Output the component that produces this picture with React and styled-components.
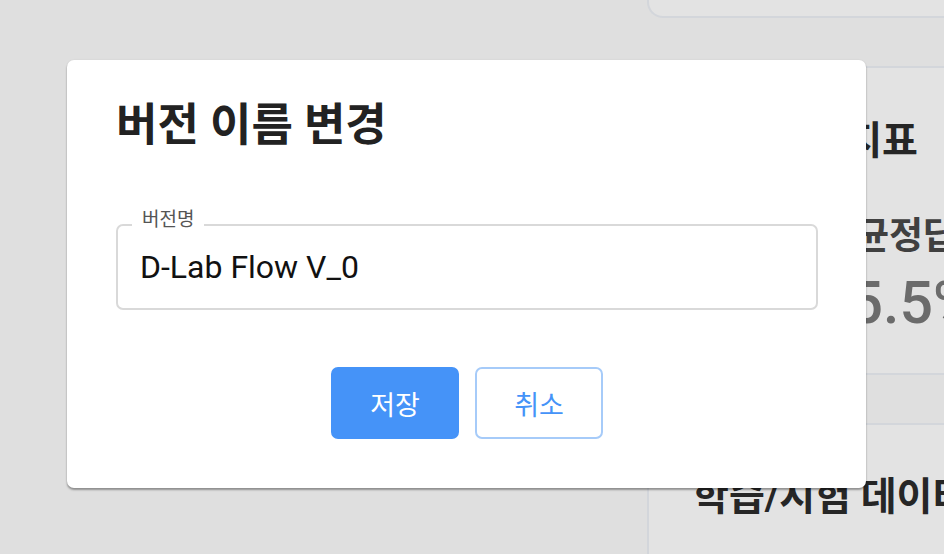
import React from "react";
import styled, { createGlobalStyle } from "styled-components";

const Global = createGlobalStyle`
  html, body { margin: 0; padding: 0; background: #dfdfdf; }
  body { font-family: Roboto, "Noto Sans CJK KR", sans-serif; }
  * { box-sizing: border-box; }
`;

const Page = styled.div`
  position: relative;
  width: 944px;
  height: 554px;
  overflow: hidden;
  display: flex;
  background: #dfdfdf;
`;

const Main = styled.div`
  width: 647px;
  flex: none;
`;

const Side = styled.div`
  flex: 1;
  display: flex;
  flex-direction: column;
  gap: 48px;
  min-width: 0;
`;

const Card = styled.section`
  flex: none;
  background: #e3e3e3;
  border: 2px solid #d3d6db;
  border-right: none;
  border-radius: 16px 0 0 16px;
  padding: ${(p) => p.$pad || "0 0 0 44px"};
  height: ${(p) => p.$h || "auto"};
  margin-top: ${(p) => p.$mt || "0"};
  white-space: nowrap;
`;

const CardTitle = styled.h2`
  margin: 0;
  font-size: 39px;
  line-height: 44px;
  font-weight: 700;
  color: #262626;
`;

const StatRow = styled.div`
  display: flex;
  gap: 40px;
  margin-top: 52px;
`;

const Stat = styled.div`
  display: flex;
  flex-direction: column;
  gap: 14px;
  width: ${(p) => p.$w || "auto"};
  flex: none;
`;

const StatLabel = styled.div`
  font-size: 37px;
  line-height: 44px;
  font-weight: 600;
  color: #404040;
  padding-left: ${(p) => p.$indent || "0"};
`;

const StatValue = styled.div`
  font-size: 59px;
  line-height: 60px;
  font-weight: 500;
  color: #6b6b6b;
`;

const Dialog = styled.div`
  position: absolute;
  left: 67px;
  top: 60px;
  width: 799px;
  height: 428px;
  background: #fff;
  border-radius: 7px;
  box-shadow: 0 2px 2px rgba(0, 0, 0, 0.35), 0 0 2px rgba(0, 0, 0, 0.08);
  padding: 38px 48px 49px 49px;
  display: flex;
  flex-direction: column;
`;

const DialogTitle = styled.h1`
  margin: 0;
  font-size: 45px;
  line-height: 56px;
  font-weight: 700;
  color: #222;
`;

const Field = styled.div`
  position: relative;
  margin-top: 70px;
  height: 86px;
  border: 2px solid #d9d9d9;
  border-radius: 7px;
  display: flex;
  align-items: center;
  padding-left: 22px;
`;

const FieldLabel = styled.span`
  position: absolute;
  left: 14px;
  top: -18px;
  padding: 0 10px;
  background: #fff;
  font-size: 19px;
  line-height: 24px;
  color: #555;
`;

const FieldInput = styled.div`
  font-size: 32px;
  line-height: 40px;
  color: #111;
`;

const Actions = styled.div`
  margin-top: auto;
  display: flex;
  justify-content: center;
  gap: 16px;
`;

const Button = styled.button`
  width: 128px;
  height: 72px;
  border-radius: 7px;
  font-family: inherit;
  font-size: 27px;
  cursor: pointer;
  border: 2px solid ${(p) => (p.$primary ? "#4593f8" : "#a6cbf9")};
  background: ${(p) => (p.$primary ? "#4593f8" : "#fff")};
  color: ${(p) => (p.$primary ? "#fff" : "#4593f8")};
`;

export default function App() {
  return (
    <>
      <Global />
      <Page>
        <Main />
        <Side>
          <Card $h="60px" $mt="-42px" />
          <Card $h="309px" $pad="51px 0 0 44px">
            <CardTitle>모델성능 지표</CardTitle>
            <StatRow>
              <Stat $w="83px">
                <StatLabel>정확도</StatLabel>
                <StatValue>92%</StatValue>
              </Stat>
              <Stat>
                <StatLabel $indent="5px">평균정답률</StatLabel>
                <StatValue>95.5%</StatValue>
              </Stat>
            </StatRow>
          </Card>
          <Card $h="200px" $pad="50px 0 0 44px">
            <CardTitle>학습/시험 데이터</CardTitle>
          </Card>
        </Side>
        <Dialog role="dialog">
          <DialogTitle>버전 이름 변경</DialogTitle>
          <Field>
            <FieldLabel>버전명</FieldLabel>
            <FieldInput>D-Lab Flow V_0</FieldInput>
          </Field>
          <Actions>
            <Button $primary>저장</Button>
            <Button>취소</Button>
          </Actions>
        </Dialog>
      </Page>
    </>
  );
}
